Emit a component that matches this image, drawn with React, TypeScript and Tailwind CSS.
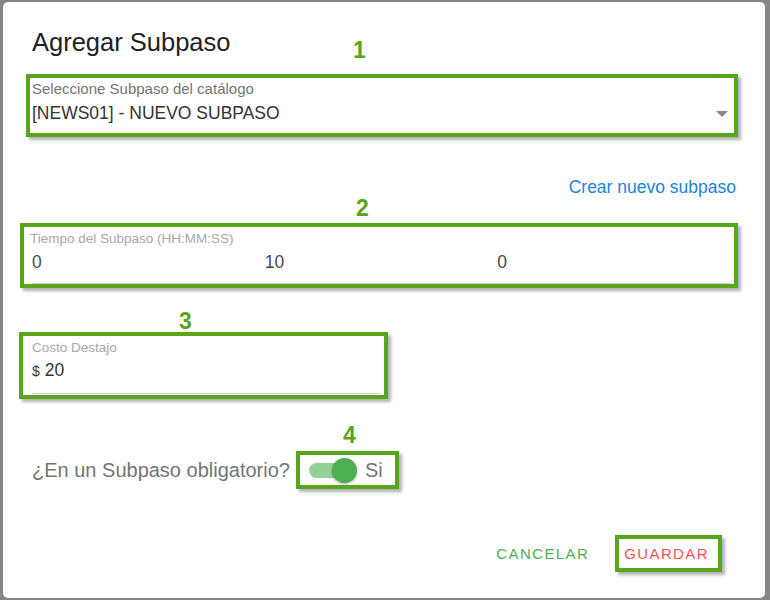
import React from 'react';

const mark = 'border-4 border-[#58a61c] shadow-[3px_3px_3px_rgba(0,0,0,0.3)]';

function Num({ n, className }: { n: string; className: string }) {
  return (
    <span className={`absolute text-[23px] font-bold leading-none text-[#58a61c] ${className}`}>{n}</span>
  );
}

export default function App() {
  return (
    <div className="w-[770px] h-[600px] overflow-hidden bg-[#858585] pt-[2px] pl-[3px] font-['Liberation_Sans',Arial,sans-serif]">
      <div className="w-[762px] h-[596px] rounded-[5px] bg-white px-[29px] pt-[28px] flex flex-col">
        <h2 className="text-[25.5px] leading-[25px] text-[#212121]">Agregar Subpaso</h2>

        {/* 1: catalogo */}
        <div className={`relative mt-[19px] ml-[-6px] mr-[-2px] pl-[2px] pr-[6px] pt-[2px] pb-[10px] ${mark}`}>
          <Num n="1" className="top-[-39px] left-[323px]" />
          <div className="text-[15px] leading-[17px] text-[#757575]">Seleccione Subpaso del catálogo</div>
          <div className="mt-[6px] flex items-center justify-between">
            <span className="text-[17.5px] leading-[20px] text-[#333]">[NEWS01] - NUEVO SUBPASO</span>
            <svg width="12" height="6" viewBox="0 0 12 6" className="mt-[2px]">
              <path d="M0 0h12L6 6z" fill="#8a8a8a" />
            </svg>
          </div>
        </div>

        <div className="mt-[40px] text-right text-[17.5px] leading-[20px] text-[#2384dc]">Crear nuevo subpaso</div>

        {/* 2: tiempo */}
        <div className={`relative mt-[26px] ml-[-12px] mr-[-2px] pt-[4px] ${mark}`}>
          <Num n="2" className="top-[-30px] left-[332px]" />
          <div className="pl-[6px] text-[13.5px] leading-[15px] text-[#a8a8a8]">Tiempo del Subpaso (HH:MM:SS)</div>
          <div className="mt-[6px] pl-[8px] pr-[4px] grid grid-cols-3">
            {['0', '10', '0'].map((v, i) => (
              <div key={i} className="pb-[11px] border-b border-[#cfcfcf] text-[17.5px] leading-[20px] text-[#4a4a4a]">
                {v}
              </div>
            ))}
          </div>
        </div>

        {/* 3: costo */}
        <div className={`relative mt-[44px] ml-[-13px] w-[369px] pt-[4px] pl-[9px] pr-[4px] pb-[1px] ${mark}`}>
          <Num n="3" className="top-[-26px] left-[156px]" />
          <div className="text-[13.5px] leading-[15px] text-[#a8a8a8]">Costo Destajo</div>
          <div className="mt-[5px] pb-[12px] border-b border-[#cfcfcf] flex items-baseline gap-[5px] text-[#333]">
            <span className="text-[14px] leading-[20px]">$</span>
            <span className="text-[17.5px] leading-[20px]">20</span>
          </div>
        </div>

        {/* 4: obligatorio */}
        <div className="mt-[52px] flex items-center">
          <span className="text-[20px] leading-[23px] text-[#757575]">¿En un Subpaso obligatorio?</span>
          <div className={`relative ml-[6px] h-[38px] pl-[9px] pr-[12px] flex items-center ${mark}`}>
            <Num n="4" className="top-[-31px] left-[43px]" />
            <div className="relative w-[48px] h-[25px] flex items-center">
              <div className="w-[42px] h-[15px] rounded-full bg-[#94d197]" />
              <div className="absolute right-0 top-0 w-[25px] h-[25px] rounded-full bg-[#4caf50] shadow-[0_1px_3px_rgba(0,0,0,0.35)]" />
            </div>
            <span className="ml-[8px] text-[20px] leading-[23px] text-[#757575]">Si</span>
          </div>
        </div>

        {/* acciones */}
        <div className="mt-[46px] flex items-center justify-end mr-[14px]">
          <button className="text-[15px] leading-[17px] tracking-[1.4px] text-[#4caf50]">CANCELAR</button>
          <button className={`ml-[26px] h-[37px] pl-[5px] pr-[9px] text-[15px] leading-[17px] tracking-[1.4px] text-[#ff5252] ${mark}`}>
            GUARDAR
          </button>
        </div>
      </div>
    </div>
  );
}
